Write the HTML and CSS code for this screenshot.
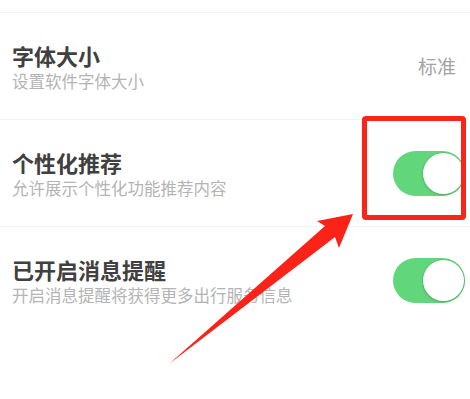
FILE: index.html
```html
<!DOCTYPE html>
<html lang="zh-CN">
<head>
<meta charset="utf-8">
<link rel="stylesheet" href="styles.css">
</head>
<body>
<div class="page">
  <div class="list">
    <div class="row">
      <div class="text">
        <div class="title">字体大小</div>
        <div class="sub">设置软件字体大小</div>
      </div>
      <div class="value">标准</div>
    </div>
    <div class="row">
      <div class="text">
        <div class="title">个性化推荐</div>
        <div class="sub">允许展示个性化功能推荐内容</div>
      </div>
      <div class="toggle"><span class="knob"></span></div>
    </div>
    <div class="row last">
      <div class="text">
        <div class="title">已开启消息提醒</div>
        <div class="sub">开启消息提醒将获得更多出行服务信息</div>
      </div>
      <div class="toggle"><span class="knob"></span></div>
    </div>
  </div>
  <div class="highlight"></div>
  <svg class="arrow" width="470" height="399" viewBox="0 0 470 399">
    <polygon points="169,364 325,226 317,221 353,214 339,248 335,237" fill="#fb2217"/>
  </svg>
</div>
</body>
</html>
```

FILE: styles.css
```css
html, body {
  margin: 0;
  padding: 0;
  background: #ffffff;
}
.page {
  position: relative;
  width: 470px;
  height: 399px;
  overflow: hidden;
  font-family: "Noto Sans CJK SC", "Noto Sans", sans-serif;
}
.list {
  padding-top: 12px;
}
.row {
  box-sizing: border-box;
  height: 107px;
  padding: 0 5px 0 12px;
  display: flex;
  align-items: center;
  justify-content: space-between;
  border-top: 1px solid #f3f3f3;
}
.text {
  display: flex;
  flex-direction: column;
}
.title {
  font-size: 22px;
  line-height: 28px;
  font-weight: 700;
  color: #404040;
  padding-bottom: 1px;
}
.sub {
  font-size: 16.5px;
  line-height: 22px;
  color: #b4b4b4;
}
.value {
  font-size: 19px;
  line-height: 24px;
  color: #a3a3a3;
  margin-right: 9px;
}
.toggle {
  position: relative;
  width: 72px;
  height: 45px;
  border-radius: 23px;
  background: #62d67a;
}
.knob {
  position: absolute;
  right: 1px;
  top: 2px;
  width: 41px;
  height: 41px;
  border-radius: 50%;
  background: #ffffff;
  box-shadow: 0 1px 3px rgba(0, 0, 0, 0.18), 0 0 0 1px rgba(90, 190, 110, 0.35);
}
.highlight {
  position: absolute;
  left: 362px;
  top: 116px;
  width: 104px;
  height: 104px;
  box-sizing: border-box;
  border: 5px solid #fa2419;
  border-radius: 4px;
}
.arrow {
  position: absolute;
  left: 0;
  top: 0;
}
```
